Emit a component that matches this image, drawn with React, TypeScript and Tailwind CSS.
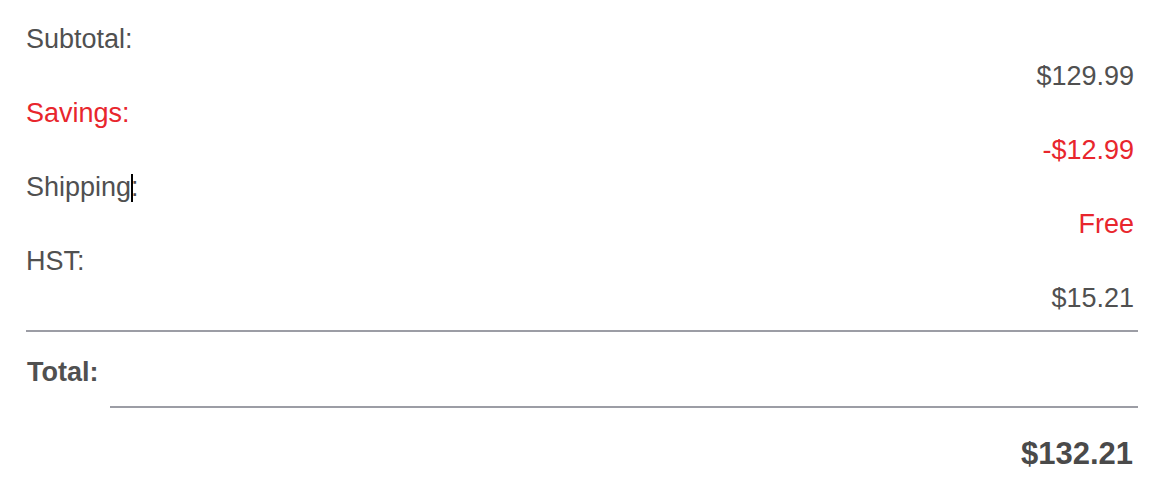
import React from "react";

const font = { fontFamily: '"Liberation Sans", Arial, Helvetica, sans-serif' };

function Row({
  label,
  value,
  labelRed,
  valueRed,
  caret,
}: {
  label: string;
  value: string;
  labelRed?: boolean;
  valueRed?: boolean;
  caret?: boolean;
}) {
  return (
    <div>
      <div className={`h-[37px] leading-[37px] text-[27px] ${labelRed ? "text-[#e8262d]" : "text-[#505050]"}`}>
        {caret ? (
          <>
            Shipping
            <span className="relative inline-block w-0 align-baseline">
              <span className="absolute left-[0px] top-[-22px] h-[28px] w-[2px] bg-black" />
            </span>
            :
          </>
        ) : (
          label
        )}
      </div>
      <div
        className={`h-[37px] leading-[37px] text-[27px] text-right pr-[4px] ${valueRed ? "text-[#e8262d]" : "text-[#505050]"}`}
      >
        {value}
      </div>
    </div>
  );
}

export default function App() {
  return (
    <div className="w-[1150px] h-[478px] bg-white overflow-hidden" style={font}>
      <div className="ml-[26px] mr-[12px] pt-[21px]">
        <Row label="Subtotal:" value="$129.99" />
        <Row label="Savings:" value="-$12.99" labelRed valueRed />
        <Row label="Shipping:" value="Free" valueRed caret />
        <Row label="HST:" value="$15.21" />
        <div className="mt-[13px] h-[2px] bg-[#9c9da5]" />
        <div className="mt-[22px] h-[37px] leading-[37px] text-[27px] font-bold text-[#505050] pl-[1px]">Total:</div>
        <div className="mt-[15px] ml-[84px] h-[2px] bg-[#9c9da5]" />
        <div className="mt-[26px] h-[40px] leading-[40px] text-[31px] font-bold text-[#4a4a4a] text-right pr-[5px]">$132.21</div>
      </div>
    </div>
  );
}
